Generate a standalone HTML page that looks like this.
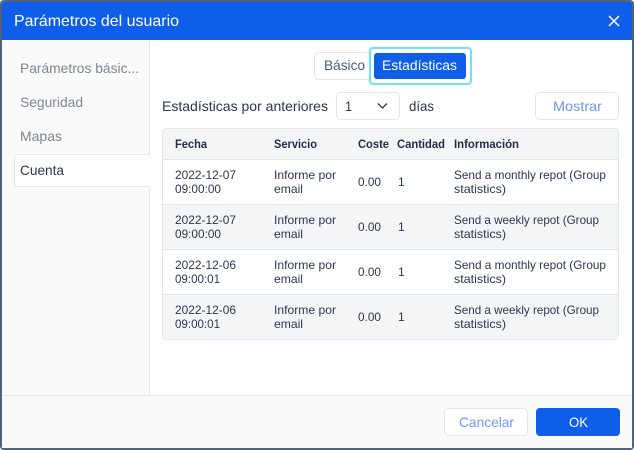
<!DOCTYPE html>
<html><head><meta charset="utf-8"><style>
html,body{margin:0;padding:0;background:#fff;width:634px;height:450px;overflow:hidden}
svg{display:block}
text{font-family:"Liberation Sans",sans-serif;font-size:12px;fill:#2c3650}
.t14{font-size:14px}
.side{font-size:14px;fill:#7d8594}
.b{font-weight:bold;fill:#232e46}
</style></head><body>
<svg width="634" height="450" viewBox="0 0 634 450" xmlns="http://www.w3.org/2000/svg">
<rect x="0" y="0" width="634" height="450" rx="4" fill="#52637f"/>
<rect x="2" y="2" width="630" height="446" rx="2" fill="#fff"/>
<path d="M2 40V4a2 2 0 0 1 2-2H630a2 2 0 0 1 2 2V40Z" fill="#0f5eea"/>
<text x="14" y="26" style="font-size:16px;fill:#fff" textLength="165" lengthAdjust="spacingAndGlyphs">Parámetros del usuario</text>
<path d="M609 16L619 26M619 16L609 26" stroke="#fff" stroke-width="1.5" fill="none"/>
<rect x="2" y="40" width="147" height="355" fill="#fafafa"/>
<rect x="149" y="40" width="1" height="355" fill="#e6e7eb"/>
<rect x="2" y="395" width="630" height="53" fill="#fafafa"/>
<rect x="2" y="395" width="630" height="1" fill="#e6e7eb"/>
<path d="M150 154.500H18a3.500 3.500 0 0 0-3.500 3.500V183a3.500 3.500 0 0 0 3.500 3.500H150Z" fill="#fff" stroke="none"/>
<path d="M150 154.500H18a3.500 3.500 0 0 0-3.500 3.500V183a3.500 3.500 0 0 0 3.500 3.500H150" fill="none" stroke="#e6e7eb"/>
<text class="side" x="20" y="73" textLength="119" lengthAdjust="spacingAndGlyphs">Parámetros básic...</text>
<text class="side" x="20" y="107" textLength="63" lengthAdjust="spacingAndGlyphs">Seguridad</text>
<text class="side" x="20" y="141" textLength="42" lengthAdjust="spacingAndGlyphs">Mapas</text>
<text class="t14" x="20" y="175" textLength="44" lengthAdjust="spacingAndGlyphs">Cuenta</text>
<rect x="314.500" y="52.500" width="60" height="27" rx="4" fill="#fff" stroke="#e3e5ea"/>
<text class="t14" x="324" y="70" textLength="41" lengthAdjust="spacingAndGlyphs" style="fill:#44597a">Básico</text>
<rect x="370" y="48" width="101" height="36" rx="3" fill="#fff" stroke="#6fe3f1" stroke-width="2"/>
<rect x="374" y="53" width="92" height="26" rx="3" fill="#0f5eea"/>
<text class="t14" x="382" y="70" textLength="75" lengthAdjust="spacingAndGlyphs" style="fill:#fff">Estadísticas</text>
<text class="t14" x="162" y="111" textLength="166" lengthAdjust="spacingAndGlyphs">Estadísticas por anteriores</text>
<rect x="336.500" y="92.500" width="63" height="27" rx="4" fill="#fff" stroke="#e3e5ea"/>
<text class="t14" x="345" y="111" textLength="7" lengthAdjust="spacingAndGlyphs">1</text>
<path d="M378 103.500L382.500 108L387 103.500" stroke="#3c475c" stroke-width="1.500" fill="none"/>
<text class="t14" x="409" y="111" textLength="25" lengthAdjust="spacingAndGlyphs">días</text>
<rect x="535.500" y="92.500" width="83" height="27" rx="4" fill="#fff" stroke="#e3e5ea"/>
<text class="t14" x="553" y="111" textLength="49" lengthAdjust="spacingAndGlyphs" style="fill:#6e96fb">Mostrar</text>
<rect x="162.500" y="128.500" width="456" height="211" rx="4" fill="#fff" stroke="#e3e5ea"/>
<path d="M163 159V132a3 3 0 0 1 3-3H615a3 3 0 0 1 3 3V159Z" fill="#f4f5f7"/>
<rect x="163" y="205" width="455" height="45" fill="#f4f5f7"/>
<path d="M163 295H618V336a3 3 0 0 1-3 3H166a3 3 0 0 1-3-3Z" fill="#f4f5f7"/>
<rect x="163" y="159" width="455" height="1" fill="#e3e5ea"/>
<rect x="163" y="204" width="455" height="1" fill="#e3e5ea"/>
<rect x="163" y="249" width="455" height="1" fill="#e3e5ea"/>
<rect x="163" y="294" width="455" height="1" fill="#e3e5ea"/>
<text class="b" x="175" y="148" textLength="32" lengthAdjust="spacingAndGlyphs">Fecha</text>
<text class="b" x="274" y="148" textLength="43" lengthAdjust="spacingAndGlyphs">Servicio</text>
<text class="b" x="358" y="148" textLength="31" lengthAdjust="spacingAndGlyphs">Coste</text>
<text class="b" x="397" y="148" textLength="48" lengthAdjust="spacingAndGlyphs">Cantidad</text>
<text class="b" x="454" y="148" textLength="65" lengthAdjust="spacingAndGlyphs">Información</text>

<text x="175" y="179" textLength="61" lengthAdjust="spacingAndGlyphs">2022-12-07</text>
<text x="175" y="193" textLength="46" lengthAdjust="spacingAndGlyphs">09:00:00</text>
<text x="274" y="179" textLength="62" lengthAdjust="spacingAndGlyphs">Informe por</text>
<text x="274" y="193" textLength="29" lengthAdjust="spacingAndGlyphs">email</text>
<text x="358" y="186" textLength="23" lengthAdjust="spacingAndGlyphs">0.00</text>
<text x="398" y="186">1</text>
<text x="454" y="179" textLength="152" lengthAdjust="spacingAndGlyphs">Send a monthly repot (Group</text>
<text x="454" y="193" textLength="52" lengthAdjust="spacingAndGlyphs">statistics)</text>

<text x="175" y="224" textLength="61" lengthAdjust="spacingAndGlyphs">2022-12-07</text>
<text x="175" y="238" textLength="46" lengthAdjust="spacingAndGlyphs">09:00:00</text>
<text x="274" y="224" textLength="62" lengthAdjust="spacingAndGlyphs">Informe por</text>
<text x="274" y="238" textLength="29" lengthAdjust="spacingAndGlyphs">email</text>
<text x="358" y="231" textLength="23" lengthAdjust="spacingAndGlyphs">0.00</text>
<text x="398" y="231">1</text>
<text x="454" y="224" textLength="145" lengthAdjust="spacingAndGlyphs">Send a weekly repot (Group</text>
<text x="454" y="238" textLength="52" lengthAdjust="spacingAndGlyphs">statistics)</text>

<text x="175" y="269" textLength="61" lengthAdjust="spacingAndGlyphs">2022-12-06</text>
<text x="175" y="283" textLength="45" lengthAdjust="spacingAndGlyphs">09:00:01</text>
<text x="274" y="269" textLength="62" lengthAdjust="spacingAndGlyphs">Informe por</text>
<text x="274" y="283" textLength="29" lengthAdjust="spacingAndGlyphs">email</text>
<text x="358" y="276" textLength="23" lengthAdjust="spacingAndGlyphs">0.00</text>
<text x="398" y="276">1</text>
<text x="454" y="269" textLength="152" lengthAdjust="spacingAndGlyphs">Send a monthly repot (Group</text>
<text x="454" y="283" textLength="52" lengthAdjust="spacingAndGlyphs">statistics)</text>

<text x="175" y="314" textLength="61" lengthAdjust="spacingAndGlyphs">2022-12-06</text>
<text x="175" y="328" textLength="45" lengthAdjust="spacingAndGlyphs">09:00:01</text>
<text x="274" y="314" textLength="62" lengthAdjust="spacingAndGlyphs">Informe por</text>
<text x="274" y="328" textLength="29" lengthAdjust="spacingAndGlyphs">email</text>
<text x="358" y="321" textLength="23" lengthAdjust="spacingAndGlyphs">0.00</text>
<text x="398" y="321">1</text>
<text x="454" y="314" textLength="145" lengthAdjust="spacingAndGlyphs">Send a weekly repot (Group</text>
<text x="454" y="328" textLength="52" lengthAdjust="spacingAndGlyphs">statistics)</text>

<rect x="444.500" y="408.500" width="83" height="27" rx="4" fill="#fff" stroke="#e3e5ea"/>
<text class="t14" x="459" y="427" textLength="55" lengthAdjust="spacingAndGlyphs" style="fill:#6e96fb">Cancelar</text>
<rect x="536" y="408" width="84" height="28" rx="4" fill="#0f5eea"/>
<text class="t14" x="569" y="427" textLength="19" lengthAdjust="spacingAndGlyphs" style="fill:#fff">OK</text>
</svg>
</body></html>
